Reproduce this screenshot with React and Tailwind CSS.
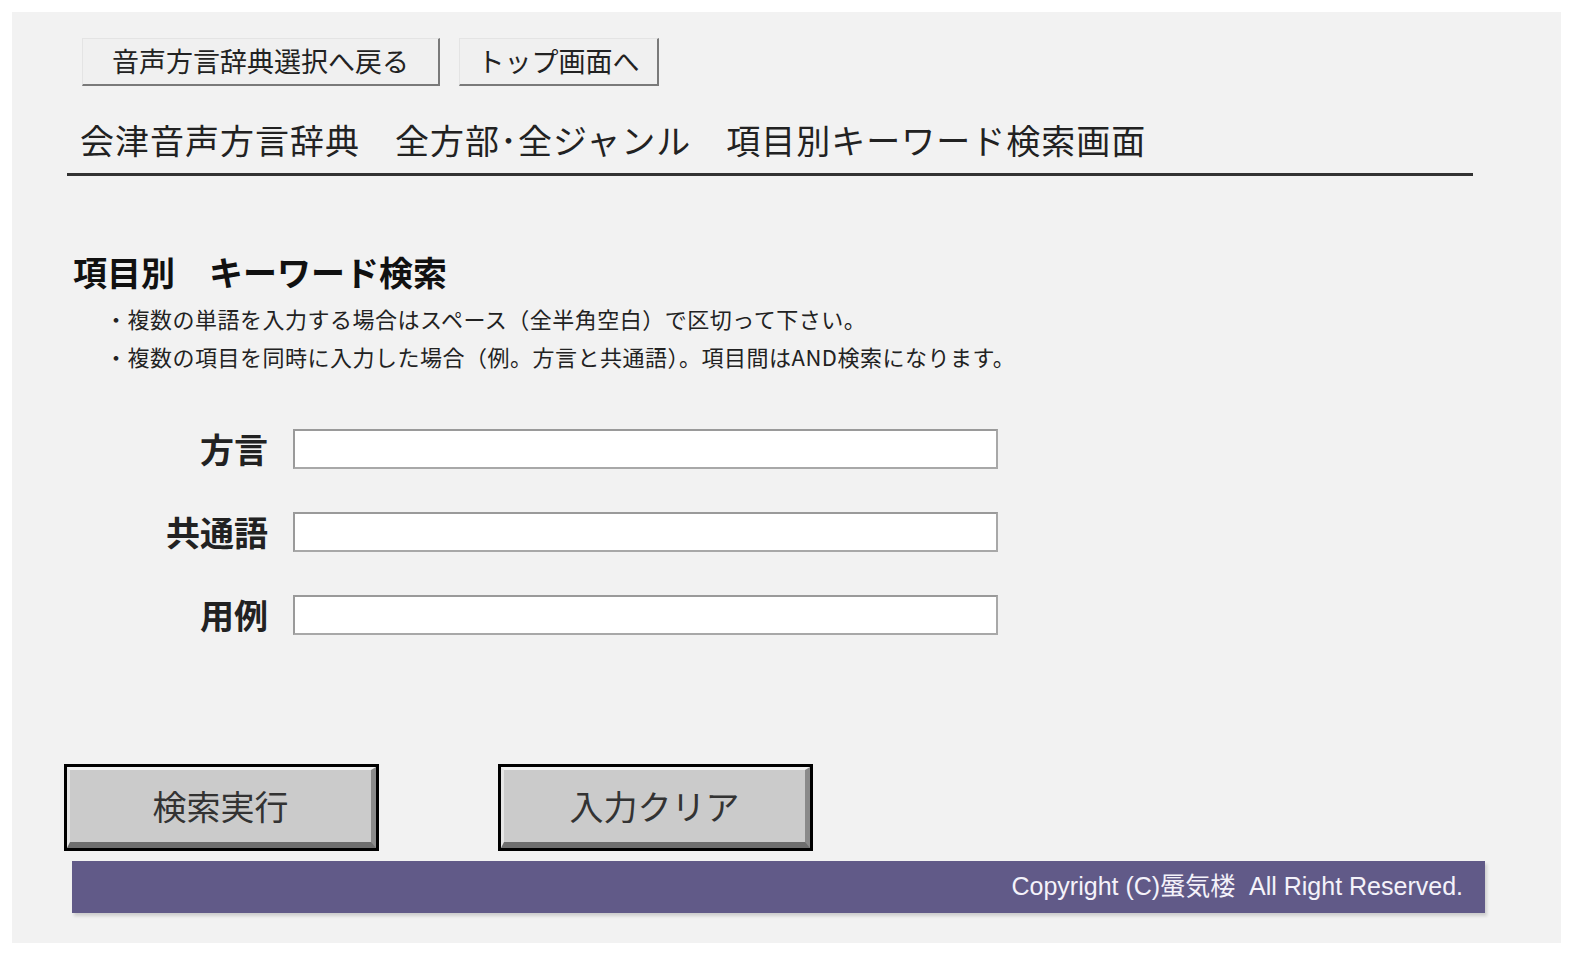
import React from 'react';

const jp = { fontFamily: '"MS UI Gothic", "Noto Sans CJK JP", sans-serif' };

function TopButton({ children, w }) {
  return (
    <button
      className={`${w} h-[48px] bg-[#f0f0f0] border-t border-l border-t-[#e4e4e4] border-l-[#e4e4e4] border-r-2 border-b-2 border-r-[#7a7a7a] border-b-[#7a7a7a] text-[27px] text-[#222] flex items-center justify-center`}
    >
      {children}
    </button>
  );
}

function Field({ label }) {
  return (
    <div className="flex items-center">
      <label className="w-[150px] text-right text-[34px] font-bold text-[#222] leading-none">{label}</label>
      <input
        type="text"
        className="ml-[25px] w-[705px] h-[40px] bg-white border-2 border-t-[#9a9a9a] border-l-[#9a9a9a] border-r-[#a8a8a8] border-b-[#a8a8a8] outline-none px-2"
      />
    </div>
  );
}

function BigButton({ children }) {
  return (
    <button className="w-[315px] h-[87px] border-[3px] border-black bg-[#2a2a2a] p-0">
      <div className="w-full h-full bg-[#cbcbcb] border-t-[3px] border-l-[3px] border-t-[#f2f2f2] border-l-[#e6e6e6] border-b-[6px] border-r-[5px] border-b-[#6e6e6e] border-r-[#8a8a8a] flex items-center justify-center text-[34px] text-[#333] leading-none">
        {children}
      </div>
    </button>
  );
}

export default function App() {
  return (
    <div className="min-h-screen bg-white pt-[12px] pl-[12px]" style={jp}>
      <div className="w-[1549px] h-[931px] bg-[#f2f2f2] flex flex-col">
        <div className="flex gap-[19px] ml-[70px] mt-[26px]">
          <TopButton w="w-[358px]">音声方言辞典選択へ戻る</TopButton>
          <TopButton w="w-[200px]">トップ画面へ</TopButton>
        </div>

        <div className="ml-[55px] w-[1406px] mt-[20px] h-[70px] flex items-center pl-[13px] border-b-[3px] border-[#333]">
          <h1 className="text-[34px] text-[#222] leading-none tracking-[1px] whitespace-pre">会津音声方言辞典　全方部･全ジャンル　項目別キーワード検索画面</h1>
        </div>

        <h2 className="ml-[61px] mt-[76px] h-[40px] flex items-center text-[34px] font-semibold text-[#111] leading-none whitespace-pre">項目別　キーワード検索</h2>

        <div className="ml-[93px] mt-[7px] text-[22px] tracking-[0.5px] text-[#222] leading-[38px]">
          <p>・複数の単語を入力する場合はスペース（全半角空白）で区切って下さい。</p>
          <p>・複数の項目を同時に入力した場合（例。方言と共通語）。項目間はAND検索になります。</p>
        </div>

        <div className="ml-[106px] mt-[54px] flex flex-col gap-[43px]">
          <Field label="方言" />
          <Field label="共通語" />
          <Field label="用例" />
        </div>

        <div className="ml-[52px] mt-[129px] flex gap-[119px]">
          <BigButton>検索実行</BigButton>
          <BigButton>入力クリア</BigButton>
        </div>

        <footer className="ml-[60px] mt-[10px] w-[1413px] h-[52px] bg-[#615a88] shadow-[2px_3px_3px_rgba(0,0,0,0.15)] flex items-center justify-end pr-[22px]">
          <span className="text-[25px] text-[#f4f2fa]" style={{ fontFamily: '"Liberation Sans", "Noto Sans CJK JP", sans-serif' }}>
            Copyright (C)蜃気楼&nbsp;&nbsp;All Right Reserved.
          </span>
        </footer>
      </div>
    </div>
  );
}
